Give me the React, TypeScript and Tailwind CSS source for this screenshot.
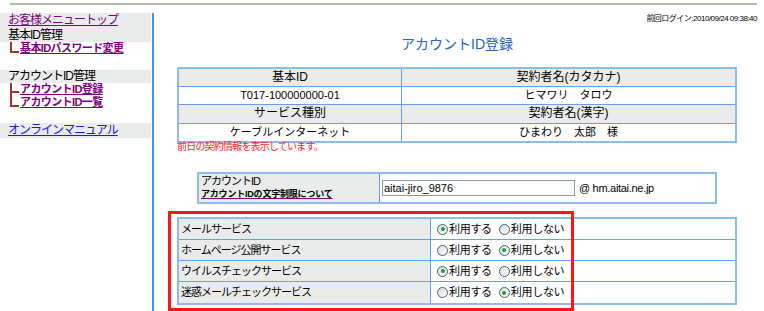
import React from 'react';

const font = "font-['Liberation_Sans','Noto_Sans_CJK_JP',sans-serif]";

function Tree({ tee }: { tee?: boolean }) {
  return (
    <svg width="10" height="13" viewBox="0 0 10 13" className="shrink-0">
      <path d={tee ? 'M1 0V13M1 9H9' : 'M1 0V10H9'} stroke="#a8322a" strokeWidth="2" fill="none" />
    </svg>
  );
}

function Radio({ on }: { on?: boolean }) {
  return (
    <span className="inline-flex w-[11px] h-[11px] rounded-full border border-[#3c5f8c] bg-gradient-to-br from-[#dcdcd6] to-white items-center justify-center shrink-0">
      {on && <span className="w-[4px] h-[4px] rounded-full bg-[#21a221]" />}
    </span>
  );
}

const services = [
  { name: 'メールサービス', use: true },
  { name: 'ホームページ公開サービス', use: false },
  { name: 'ウイルスチェックサービス', use: true },
  { name: '迷惑メールチェックサービス', use: false },
];

export default function App() {
  return (
    <div className={`relative w-[764px] h-[311px] overflow-hidden bg-white text-black ${font}`}>
      <div className="ml-[10px] mr-[7px] mt-[3px] h-[2px] bg-[#bab7aa]" />

      <div className="flex mt-[8px]">
        {/* sidebar */}
        <aside className="w-[154px] h-[298px] border-r-2 border-[#3d95f0] shrink-0">
          <div className="w-[151px] bg-[#eaecec] pl-[8px]">
            <div className="h-[15px] leading-[15px] text-[12px] tracking-[-1px]">
              <a className="text-[#800080] underline">お客様メニュートップ</a>
            </div>
            <div className="h-[14px] leading-[14px] text-[12px] tracking-[-1px]">基本ID管理</div>
          </div>
          <div className="flex items-start h-[14px] pl-[10px]">
            <Tree />
            <a className="text-[11px] leading-[13px] font-bold tracking-[-0.6px] text-[#800080] underline">基本IDパスワード変更</a>
          </div>

          <div className="w-[151px] mt-[14px] h-[13px] bg-[#eaecec] pl-[8px] text-[12px] leading-[13px] tracking-[-1px]">
            アカウントID管理
          </div>
          <div className="flex items-start h-[13px] pl-[10px]">
            <Tree tee />
            <a className="text-[11px] leading-[13px] font-bold tracking-[-0.6px] text-[#800080] underline">アカウントID登録</a>
          </div>
          <div className="flex items-start h-[13px] pl-[10px]">
            <Tree />
            <a className="text-[11px] leading-[13px] font-bold tracking-[-0.6px] text-[#800080] underline">アカウントID一覧</a>
          </div>

          <div className="w-[151px] mt-[14px] h-[15px] bg-[#eaecec] pl-[8px] text-[12px] leading-[15px] tracking-[-1px]">
            <a className="text-[#1a1ae0] underline">オンラインマニュアル</a>
          </div>
        </aside>

        {/* main */}
        <main className="flex-1 flex flex-col items-center pr-[4px]">
          <div className="self-end mr-[3px] h-[12px] pt-[1px] text-[8px] leading-[9px] tracking-[-0.5px]">
            前回ログイン:2010/09/24 09:38:40
          </div>
          <div className="h-[42px] pt-[9px] leading-[20px] text-[14px] text-[#2563c4]">アカウントID登録</div>

          <div className="w-[560px] border-2 border-[#8cbcef] text-[12px] leading-[17px] text-center">
            <div className="grid grid-cols-[223px_1fr] h-[18px] bg-[#eaecec] border-b border-[#5fa3ec]">
              <div className="border-r border-[#5fa3ec]">基本ID</div>
              <div>契約者名(カタカナ)</div>
            </div>
            <div className="grid grid-cols-[223px_1fr] h-[18px] border-b border-[#5fa3ec] text-[11px]">
              <div className="border-r border-[#5fa3ec]">T017-100000000-01</div>
              <div>ヒマワリ　タロウ</div>
            </div>
            <div className="grid grid-cols-[223px_1fr] h-[19px] bg-[#eaecec] border-b border-[#5fa3ec]">
              <div className="border-r border-[#5fa3ec]">サービス種別</div>
              <div>契約者名(漢字)</div>
            </div>
            <div className="grid grid-cols-[223px_1fr] h-[17px] text-[11px]">
              <div className="border-r border-[#5fa3ec]">ケーブルインターネット</div>
              <div>ひまわり　太郎　様</div>
            </div>
          </div>
          <div className="w-[560px] -mt-[2px] text-[10px] leading-[12px] tracking-[-0.8px] text-[#ff1a1a]">
            前日の契約情報を表示しています。
          </div>

          <div className="mt-[19px] w-[520px] h-[32px] border-2 border-[#8cbcef] flex">
            <div className="w-[181px] bg-[#eaecec] border-r border-[#5fa3ec] pl-[2px]">
              <div className="text-[11px] leading-[15px] tracking-[-1px]">アカウントID</div>
              <a className="block w-fit text-[9px] leading-[11px] font-bold tracking-[-0.2px] underline decoration-[#800080]">
                アカウントIDの文字制限について
              </a>
            </div>
            <div className="flex items-center pl-[2px]">
              <input
                readOnly
                value="aitai-jiro_9876"
                className="w-[193px] h-[16px] border border-[#7f9db9] px-[1px] text-[11px] leading-[14px] outline-none font-['Liberation_Sans',sans-serif]"
              />
              <span className="ml-[4px] text-[11px] tracking-[-0.3px]">@ hm.aitai.ne.jp</span>
            </div>
          </div>

          <div className="mt-[13px] w-[560px] border-2 border-[#8cbcef]">
            {services.map((s, i) => (
              <div
                key={s.name}
                className={`grid grid-cols-[252px_1fr] h-[21px] ${i < services.length - 1 ? 'border-b border-[#5fa3ec]' : ''}`}
              >
                <div className="bg-[#eaecec] border-r border-[#5fa3ec] pl-[2px] flex items-center text-[11px] tracking-[-1px]">
                  {s.name}
                </div>
                <div className="flex items-center pl-[6px] text-[11px] tracking-[-0.3px]">
                  <Radio on={s.use} />
                  <span className="ml-[1px]">利用する</span>
                  <span className="ml-[7px]" />
                  <Radio on={!s.use} />
                  <span className="ml-[1px]">利用しない</span>
                </div>
              </div>
            ))}
          </div>
        </main>
      </div>

      <div className="absolute left-[168px] top-[211px] w-[406px] h-[100px] border-[3px] border-[#ff1414]" />
    </div>
  );
}
